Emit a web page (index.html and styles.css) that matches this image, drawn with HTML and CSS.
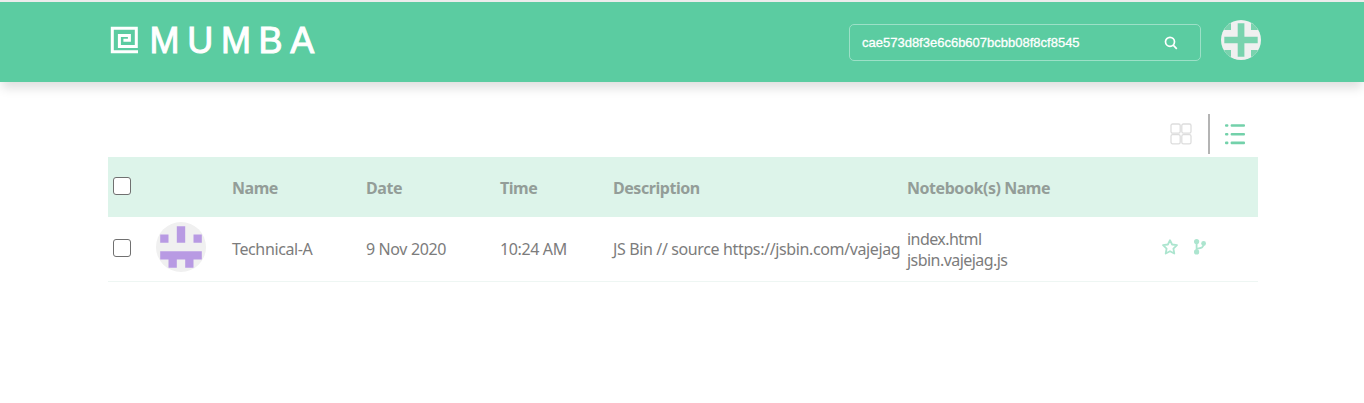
FILE: index.html
```html
<!DOCTYPE html>
<html lang="en">
<head>
<meta charset="utf-8">
<title>Mumba</title>
<link rel="stylesheet" href="styles.css">
</head>
<body>
<header class="topbar">
  <a class="brand">
    <svg class="brand-mark" width="28" height="28" viewBox="0 0 28 28" fill="none" stroke="#fff" stroke-width="3"><path d="M28 25.7H2.3V2.2h24v18.2H9.4V9.4h10v4.9h-6"/></svg>
    <span class="brand-name">MUMBA</span>
  </a>
  <div class="search">
    <span class="search-text">cae573d8f3e6c6b607bcbb08f8cf8545</span>
    <svg class="search-icon" width="14" height="14" viewBox="0 0 14 14" fill="none" stroke="#fff" stroke-width="1.7"><circle cx="6" cy="5.8" r="4.5"/><path d="M9.2 9.2l3.6 3.6"/></svg>
  </div>
  <svg class="user" width="40" height="40" viewBox="0 0 40 40"><rect width="40" height="40" fill="#f0f0f0"/><path fill="#79d3ae" d="M16.7 3.3h6.7v13.4h13.3v6.6H23.4v13.4h-6.7V23.3H3.3v-6.6h13.4zM3.3 3.3H10V10H3.3zM30 3.3h6.7V10H30zM3.3 30H10v6.7H3.3zM30 30h6.7v6.7H30z"/></svg>
</header>
<main class="content">
  <div class="views">
    <svg class="grid-icon" width="22" height="22" viewBox="0 0 22 22" fill="none" stroke="#ddd" stroke-width="1.3"><rect x="1" y="1" width="9.2" height="9.2" rx="1.6"/><rect x="11.8" y="1" width="9.2" height="9.2" rx="1.6"/><rect x="1" y="11.6" width="9.2" height="9.2" rx="1.6"/><rect x="11.8" y="11.6" width="9.2" height="9.2" rx="1.6"/></svg>
    <span class="divider"></span>
    <svg class="list-icon" width="20" height="22" viewBox="0 0 20 22" fill="#73d1aa"><rect y="1.2" width="3.4" height="2.6" rx="1"/><rect y="10" width="3.4" height="2.6" rx="1"/><rect y="18.6" width="3.4" height="2.6" rx="1"/><rect x="5.6" y="1.2" width="14.4" height="2.6" rx="1"/><rect x="5.6" y="10" width="14.4" height="2.6" rx="1"/><rect x="5.6" y="18.6" width="14.4" height="2.6" rx="1"/></svg>
  </div>
  <div class="row head">
    <span class="check"></span><span></span>
    <span>Name</span><span>Date</span><span>Time</span><span>Description</span><span>Notebook(s) Name</span><span></span>
  </div>
  <div class="row item">
    <span class="check"></span>
    <svg class="avatar" width="50" height="50" viewBox="0 0 50 50"><rect width="50" height="50" fill="#f0f0f0"/><path fill="#b89ae3" d="M20.8 4.2h8.4v16.6h-8.4zM4.2 12.5h8.3v8.3H4.2zM37.5 12.5h8.3v8.3h-8.3zM4.2 29.2h41.6v8.3h-8.3v8.3h-8.3v-8.3h-8.4v8.3h-8.3v-8.3H4.2z"/></svg>
    <span>Technical-A</span>
    <span>9 Nov 2020</span>
    <span>10:24 AM</span>
    <span>JS Bin // source https://jsbin.com/vajejag</span>
    <span class="books">index.html<br>jsbin.vajejag.js</span>
    <span class="actions">
      <svg width="18" height="18" viewBox="0 0 18 18" fill="none" stroke="#ace5cf" stroke-width="1.8" stroke-linejoin="round"><path d="M9 2.2l2.1 4.3 4.9.7-3.6 3.4.9 4.9L9 13.2l-4.3 2.3.9-4.9L2 7.2l4.9-.7z"/></svg>
      <svg width="14" height="18" viewBox="0 0 14 18" fill="#ace5cf"><circle cx="3.6" cy="3.6" r="2.6"/><circle cx="3.6" cy="13.9" r="2.6"/><circle cx="10.6" cy="5.5" r="2.4"/><path d="M3.6 4v10M10.6 6c0 4-2.9 3.8-6.8 4.8" fill="none" stroke="#ace5cf" stroke-width="1.8"/></svg>
    </span>
  </div>
</main>
</body>
</html>
```
FILE: styles.css
```css
* { box-sizing: border-box; }
body { margin: 0; background: #fff; color: #7c7c7c; font: 16px/21px "Noto Sans", sans-serif; letter-spacing: -0.37px; }
.topbar { height: 82px; padding: 0 103px 0 110px; border-top: 2px solid #ececec; background: #5bcca1; display: flex; align-items: flex-start; box-shadow: 0 8px 10px -2px rgba(0,0,0,.13); }
.brand { display: flex; padding-top: 24px; color: #fff; }
.brand-name { margin: -1px 0 0 11.5px; font: 36px/32px "Liberation Sans", Arial, sans-serif; letter-spacing: 7.7px; -webkit-text-stroke: 1px #fff; }
.search { display: flex; justify-content: space-between; align-items: center; width: 352px; height: 37px; margin: 22px 20px 0 auto; padding: 0 22px 0 12px; border: 1px solid #9ce0c7; border-radius: 5px; color: #fff; font: 13px/16px "Liberation Sans", Arial, sans-serif; letter-spacing: 0; }
.search-text { -webkit-text-stroke: .3px #fff; }
.user { margin-top: 18px; border-radius: 50%; }
.content { width: 1150px; margin: 0 0 0 108px; }
.views { height: 75px; padding: 32px 13px 3px; display: flex; justify-content: flex-end; align-items: center; }
.divider { width: 2px; height: 40px; margin: 0 15px; background: #b4b4b4; }
.grid-icon { margin-right: 1px; }
.row { display: grid; grid-template-columns: 48px 76px 134px 134px 113px 294px 254px 1fr; align-items: center; white-space: nowrap; }
.head { height: 60px; padding-top: 2px; background: #ddf4ea; color: #939d98; font-weight: 700; letter-spacing: -0.45px; }
.item { height: 65px; padding-top: 1px; border-bottom: 1px solid #eef6f3; }
.check { width: 18px; height: 18px; margin: -4px 0 0 5px; border: 1px solid #707070; border-radius: 3px; background: #fff; }
.avatar { border-radius: 50%; margin-top: -6px; }
.books { letter-spacing: -0.55px; padding-top: 1px; }
.actions { display: flex; gap: 14px; margin-top: -5px; }
```
